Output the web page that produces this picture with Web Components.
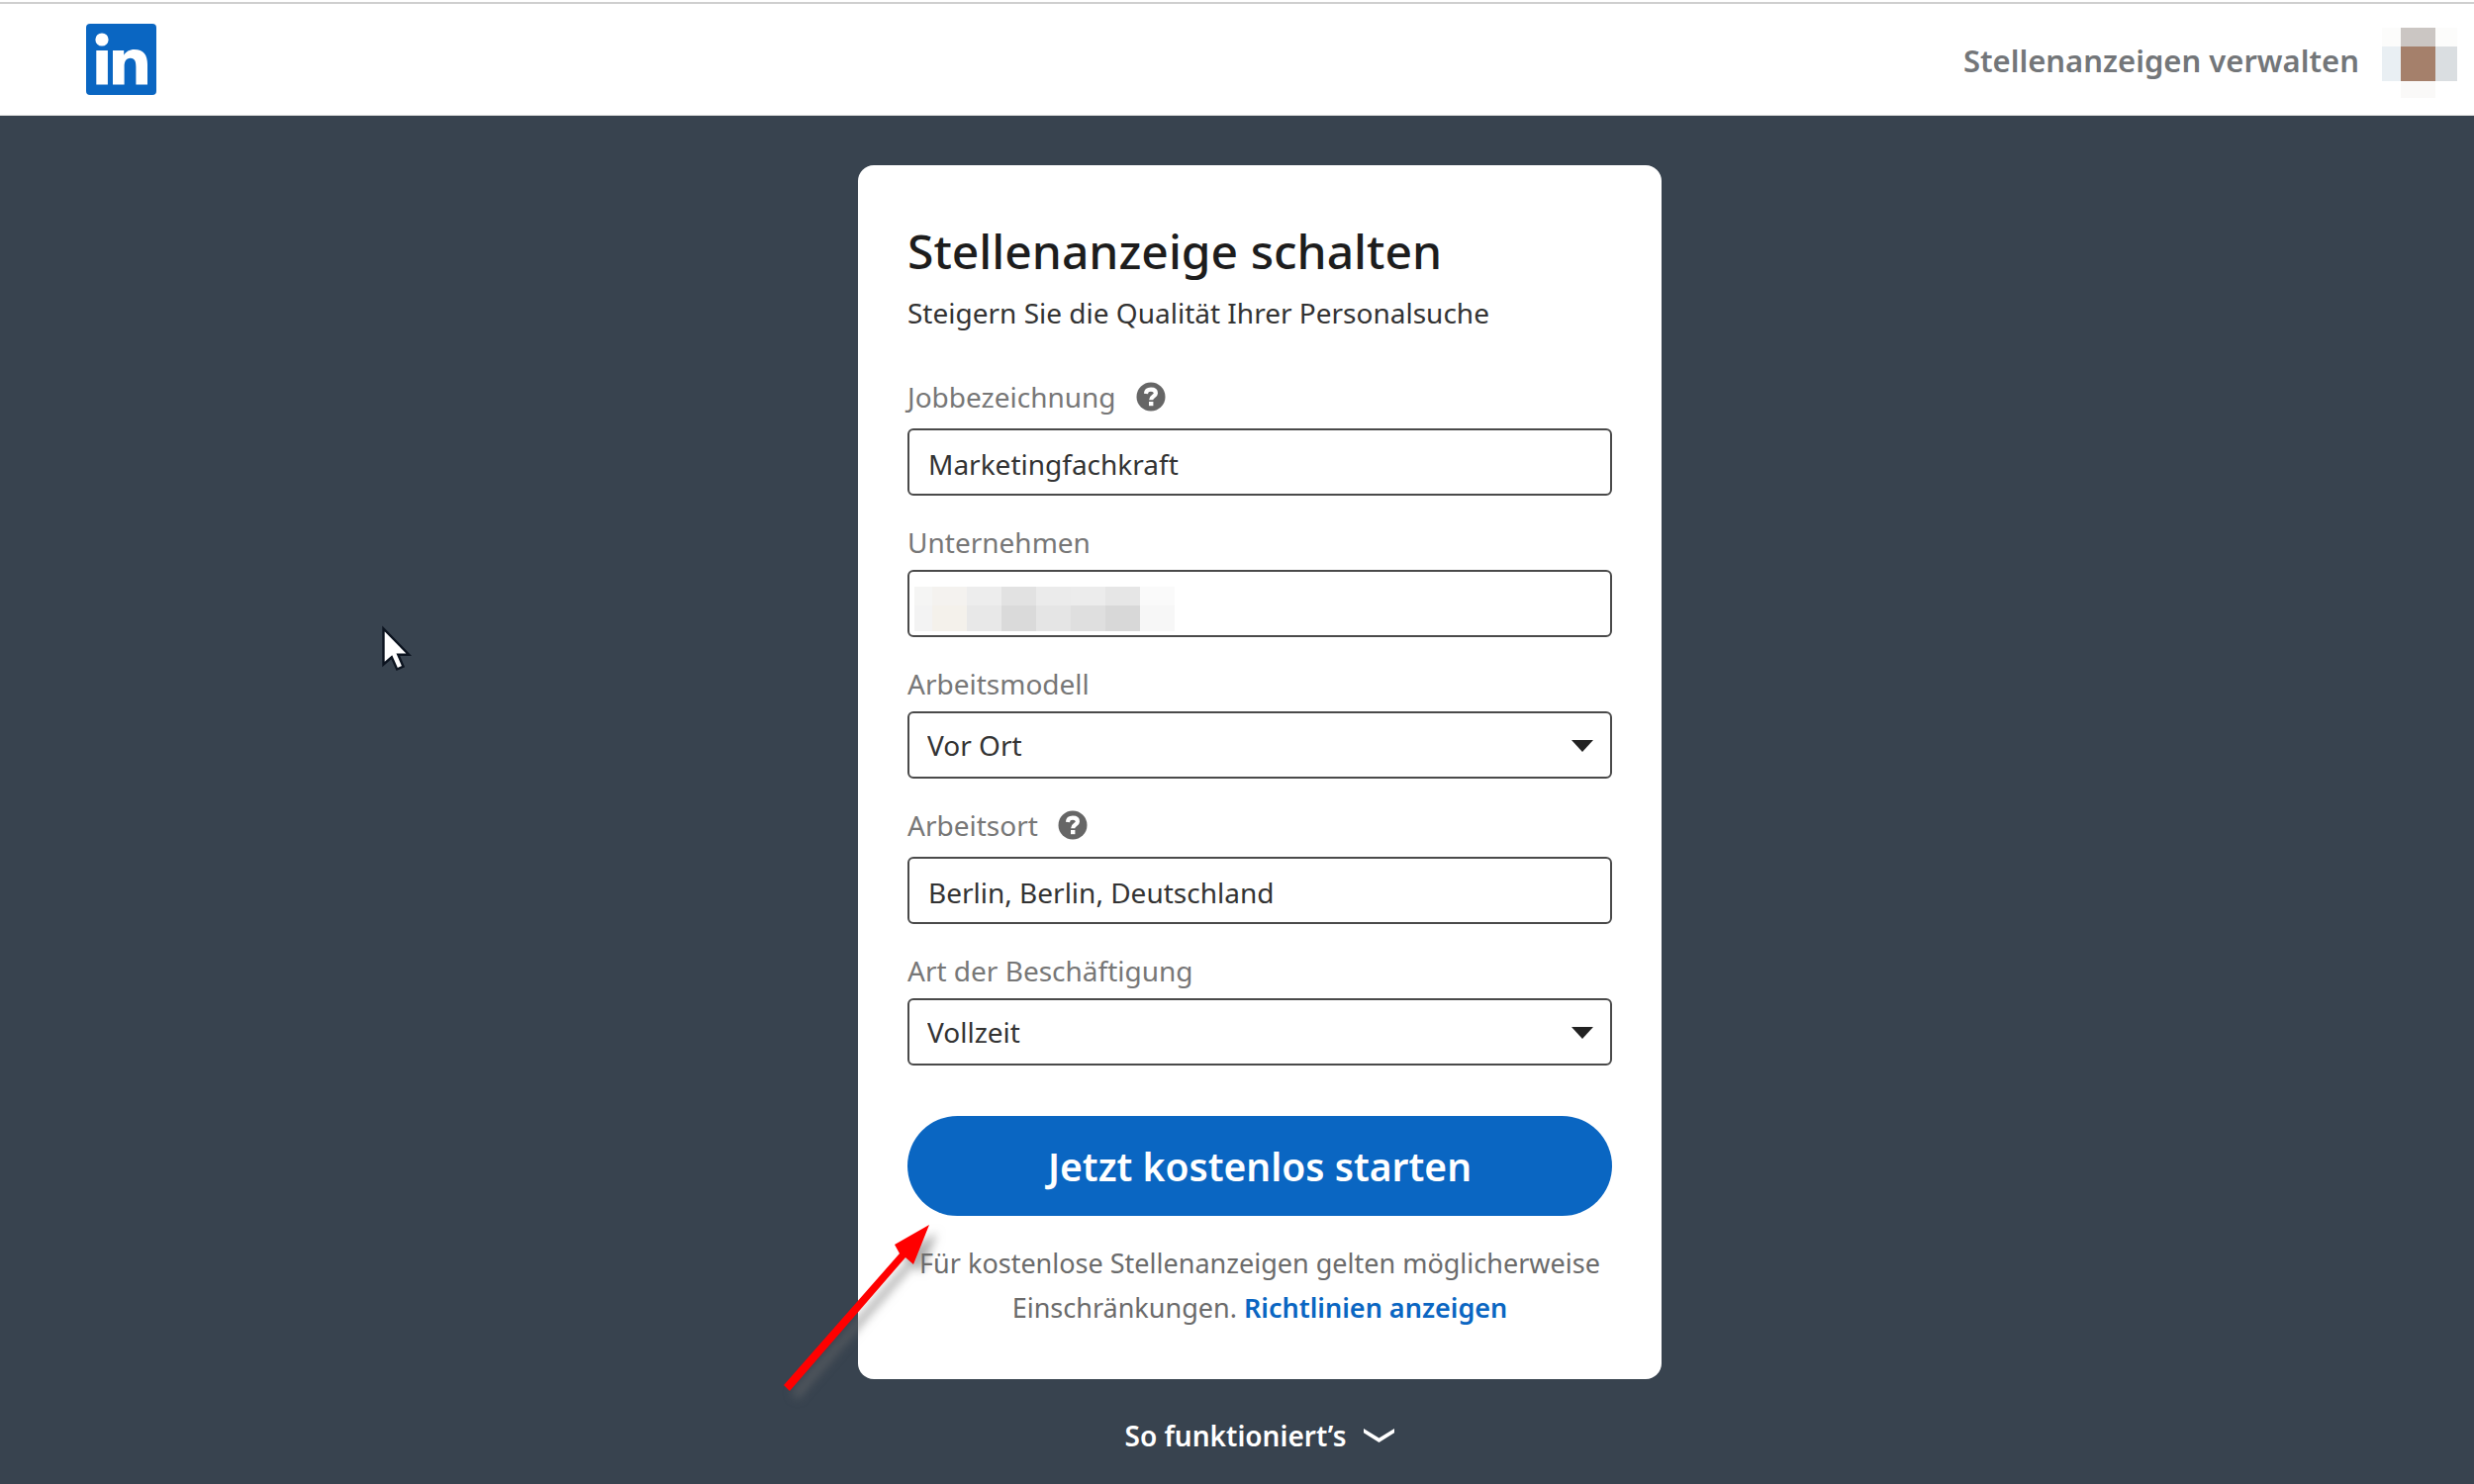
<!DOCTYPE html>
<html lang="de">
<head>
<meta charset="utf-8">
<meta name="viewport" content="width=device-width, initial-scale=1">
<title>Stellenanzeige schalten</title>
<style>
  body {
    margin: 0;
    font-family: "Noto Sans", "Open Sans", sans-serif;
    font-size: 28px;
    line-height: 40px;
    color: #1d1d1d;
    background: #38434f;
  }
</style>
</head>
<body>
<job-page>
  <page-header slot="header">Stellenanzeigen verwalten</page-header>

  <job-card>
    <span slot="title">Stellenanzeige schalten</span>
    <span slot="subtitle">Steigern Sie die Qualität Ihrer Personalsuche</span>

    <text-field value="Marketingfachkraft" help>Jobbezeichnung</text-field>
    <text-field>Unternehmen<masked-value slot="mask"></masked-value></text-field>
    <select-field options="Vor Ort,Hybrid,Remote">Arbeitsmodell</select-field>
    <text-field value="Berlin, Berlin, Deutschland" help>Arbeitsort</text-field>
    <select-field options="Vollzeit,Teilzeit,Befristet">Art der Beschäftigung</select-field>

    <start-button slot="action">Jetzt kostenlos starten</start-button>
    <legal-note slot="note" link="Richtlinien anzeigen">Für kostenlose Stellenanzeigen gelten möglicherweise Einschränkungen.</legal-note>
    <red-arrow slot="pointer"></red-arrow>
  </job-card>

  <more-toggle slot="more">So funktioniert’s</more-toggle>
  <mouse-cursor slot="cursor"></mouse-cursor>
</job-page>

<script>
class JobPage extends HTMLElement {
  constructor() {
    super();
    this.attachShadow({ mode: "open" });
  }

  static get styles() {
    return /* css */ `
      :host {
        display: flex;
        flex-direction: column;
        min-height: 100vh;
        position: relative;
      }
      main {
        flex: 1;
        display: flex;
        flex-direction: column;
        align-items: center;
        gap: 37px;
        padding: 50px 0 24px 46px;
      }
    `;
  }

  connectedCallback() {
    this.shadowRoot.innerHTML = /* html */ `
      <style>${JobPage.styles}</style>
      <slot name="header"></slot>
      <main>
        <slot></slot>
        <slot name="more"></slot>
      </main>
      <slot name="cursor"></slot>`;
  }
}

class PageHeader extends HTMLElement {
  constructor() {
    super();
    this.attachShadow({ mode: "open" });
  }

  static get styles() {
    return /* css */ `
      :host {
        display: block;
        background: #fff;
        border-top: 2px solid #fff;
        border-bottom: 1px solid #e4e4e4;
      }
      header {
        display: flex;
        align-items: center;
        justify-content: space-between;
        height: 112px;
        padding: 0 17px 0 87px;
        border-top: 2px solid #cfcfcf;
      }
      a {
        color: inherit;
        text-decoration: none;
      }
      .logo svg,
      .avatar {
        display: block;
      }
      nav {
        display: flex;
        align-items: flex-end;
        gap: 23px;
        padding-top: 6px;
        color: #737679;
        font-size: 31px;
        font-weight: 600;
      }
      nav a {
        padding-bottom: 18px;
      }
    `;
  }

  connectedCallback() {
    this.shadowRoot.innerHTML = /* html */ `
      <style>${PageHeader.styles}</style>
      <header>
        <a class="logo" href="#" aria-label="LinkedIn">
          <svg width="72" height="72" viewBox="0 0 72 72">
            <rect width="71" height="72" rx="4" fill="#0a66c2"/>
            <circle cx="16" cy="16" r="6.600" fill="#fff"/>
            <rect x="10.300" y="27" width="11.600" height="34.500" fill="#fff"/>
            <path d="M27 27h11.200v4.800c1.900-3.500 5.600-5.800 10.600-5.800C58 26 62 31.500 62 41v20.500H50.400V43.500c0-5-1.100-8.700-5.600-8.700-4.700 0-6.200 3.700-6.200 8.500v18.200H27z" fill="#fff"/>
          </svg>
        </a>
        <nav>
          <a href="#"><slot></slot></a>
          <svg class="avatar" width="76" height="71" viewBox="0 0 76 71" shape-rendering="crispEdges" aria-hidden="true">
            <rect width="76" height="19" fill="#fcfcfb"/>
            <rect x="19" width="35" height="19" fill="#cbc6c3"/>
            <rect y="19" width="19" height="35" fill="#e9eff3"/>
            <rect x="19" y="19" width="35" height="35" fill="#a5806b"/>
            <rect x="54" y="19" width="22" height="35" fill="#dadee1"/>
            <rect x="19" y="54" width="35" height="17" fill="#faf9f8"/>
          </svg>
        </nav>
      </header>`;
  }
}

class JobCard extends HTMLElement {
  constructor() {
    super();
    this.attachShadow({ mode: "open" });
  }

  static get styles() {
    return /* css */ `
      :host {
        display: block;
        box-sizing: border-box;
        position: relative;
        width: 100%;
        max-width: 812px;
        padding: 55px 50px 50px;
        background: #fff;
        border-radius: 16px;
      }
      h1 {
        margin: 0 0 10px;
        font-size: 48px;
        line-height: 64px;
        font-weight: 500;
      }
      p {
        margin: 0 0 45px;
        color: #333;
      }
      .fields {
        display: flex;
        flex-direction: column;
        gap: 28px;
        margin-bottom: 52px;
      }
    `;
  }

  connectedCallback() {
    this.shadowRoot.innerHTML = /* html */ `
      <style>${JobCard.styles}</style>
      <h1><slot name="title"></slot></h1>
      <p><slot name="subtitle"></slot></p>
      <div class="fields"><slot></slot></div>
      <slot name="action"></slot>
      <slot name="note"></slot>
      <slot name="pointer"></slot>`;
  }
}

// shared by text-field and select-field
const fieldStyles = /* css */ `
  :host {
    display: block;
  }
  .top {
    display: flex;
    align-items: center;
    gap: 20px;
    margin-bottom: 8px;
    color: #777;
  }
  :host([help]) .top {
    margin-bottom: 12px;
  }
  .box {
    position: relative;
  }
  input,
  select {
    display: block;
    box-sizing: border-box;
    width: 100%;
    height: 68px;
    margin: 0 0 -1px;
    padding: 4px 20px 0 19px;
    border: 2px solid #4a4a4a;
    border-radius: 6px;
    background: #fff;
    color: #333;
    font: inherit;
    appearance: none;
  }
  select {
    padding: 0 60px 0 18px;
  }
`;

class TextField extends HTMLElement {
  constructor() {
    super();
    this.attachShadow({ mode: "open" });
  }

  connectedCallback() {
    const help = this.hasAttribute("help") ? "<help-icon></help-icon>" : "";
    this.shadowRoot.innerHTML = /* html */ `
      <style>${fieldStyles}</style>
      <div class="top">
        <label for="field"><slot></slot></label>
        ${help}
      </div>
      <div class="box">
        <input id="field" type="text" spellcheck="false">
        <slot name="mask"></slot>
      </div>`;
    this.shadowRoot.querySelector("input").value = this.getAttribute("value") || "";
  }
}

class SelectField extends HTMLElement {
  constructor() {
    super();
    this.attachShadow({ mode: "open" });
  }

  static get styles() {
    return /* css */ `
      svg {
        position: absolute;
        right: 19px;
        top: 29px;
        pointer-events: none;
      }
    `;
  }

  connectedCallback() {
    const options = this.getAttribute("options")
      .split(",")
      .map((name) => `<option>${name}</option>`)
      .join("");
    this.shadowRoot.innerHTML = /* html */ `
      <style>${fieldStyles}${SelectField.styles}</style>
      <div class="top">
        <label for="field"><slot></slot></label>
      </div>
      <div class="box">
        <select id="field">${options}</select>
        <svg width="22" height="12" viewBox="0 0 22 12" aria-hidden="true">
          <path d="M0 0h22L11 12z" fill="#222"/>
        </svg>
      </div>`;
  }
}

class HelpIcon extends HTMLElement {
  constructor() {
    super();
    this.attachShadow({ mode: "open" });
  }

  static get styles() {
    return /* css */ `
      :host {
        display: block;
      }
      button {
        display: block;
        padding: 0;
        border: 0;
        background: none;
        cursor: pointer;
      }
      svg {
        display: block;
      }
    `;
  }

  connectedCallback() {
    this.shadowRoot.innerHTML = /* html */ `
      <style>${HelpIcon.styles}</style>
      <button type="button" aria-label="Hilfe">
        <svg width="30" height="30" viewBox="0 0 30 30">
          <circle cx="15" cy="15" r="14.500" fill="#666"/>
          <path d="M10 12c.2-3.100 2-4.400 5-4.400 3.100 0 4.900 1.400 4.900 3.800 0 3.300-4.700 3.100-4.700 6.800" fill="none" stroke="#fff" stroke-width="4.200"/>
          <rect x="13" y="20" width="4.400" height="4.200" fill="#fff"/>
        </svg>
      </button>`;
  }
}

class MaskedValue extends HTMLElement {
  constructor() {
    super();
    this.attachShadow({ mode: "open" });
  }

  static get styles() {
    return /* css */ `
      :host {
        position: absolute;
        left: 7px;
        top: 17px;
        display: grid;
        grid-template-columns: 18px repeat(7, 35px);
        grid-template-rows: 19px 26px;
        pointer-events: none;
      }
    `;
  }

  connectedCallback() {
    const tones = [
      "#f5f5f4", "#f4f2ef", "#ededed", "#e2e2e2", "#ebebeb", "#ececec", "#e6e6e6", "#fafafa",
      "#f3f3f3", "#f4f1eb", "#e8e8e8", "#dadada", "#e5e5e5", "#dfdfdf", "#d8d8d8", "#f7f7f7",
    ];
    this.shadowRoot.innerHTML = /* html */ `
      <style>${MaskedValue.styles}</style>
      ${tones.map((tone) => `<i style="background:${tone}"></i>`).join("")}`;
  }
}

class StartButton extends HTMLElement {
  constructor() {
    super();
    this.attachShadow({ mode: "open" });
  }

  static get styles() {
    return /* css */ `
      :host {
        display: block;
        margin-bottom: 25px;
      }
      button {
        display: block;
        width: 100%;
        height: 101px;
        padding: 0;
        border: 0;
        border-radius: 51px;
        background: #0a66c2;
        color: #fff;
        font: inherit;
        font-size: 39px;
        font-weight: 600;
        cursor: pointer;
      }
    `;
  }

  connectedCallback() {
    this.shadowRoot.innerHTML = /* html */ `
      <style>${StartButton.styles}</style>
      <button type="button"><slot></slot></button>`;
  }
}

class LegalNote extends HTMLElement {
  constructor() {
    super();
    this.attachShadow({ mode: "open" });
  }

  static get styles() {
    return /* css */ `
      :host {
        display: block;
        font-size: 27px;
        line-height: 45px;
        text-align: center;
        color: #6b6b6b;
      }
      a {
        color: #0a66c2;
        font-weight: 600;
        text-decoration: none;
      }
    `;
  }

  connectedCallback() {
    this.shadowRoot.innerHTML = /* html */ `
      <style>${LegalNote.styles}</style>
      <slot></slot> <a href="#">${this.getAttribute("link")}</a>`;
  }
}

class MoreToggle extends HTMLElement {
  constructor() {
    super();
    this.attachShadow({ mode: "open" });
  }

  static get styles() {
    return /* css */ `
      :host {
        display: block;
      }
      button {
        display: flex;
        align-items: center;
        gap: 18px;
        padding: 0;
        border: 0;
        background: none;
        color: #fff;
        font: inherit;
        line-height: 40px;
        font-weight: 600;
        cursor: pointer;
      }
    `;
  }

  connectedCallback() {
    this.shadowRoot.innerHTML = /* html */ `
      <style>${MoreToggle.styles}</style>
      <button type="button">
        <slot></slot>
        <svg width="31" height="14" viewBox="0 0 31 14" aria-hidden="true">
          <path d="M0 0v4.200L15.500 14 31 4.200V0L15.500 9.500z" fill="#fff"/>
        </svg>
      </button>`;
  }
}

class RedArrow extends HTMLElement {
  constructor() {
    super();
    this.attachShadow({ mode: "open" });
  }

  static get styles() {
    return /* css */ `
      :host {
        position: absolute;
        left: -76px;
        bottom: -36px;
        pointer-events: none;
      }
      svg {
        display: block;
        overflow: visible;
        filter: drop-shadow(8px 8px 5px rgba(110, 110, 110, 0.55));
      }
    `;
  }

  connectedCallback() {
    this.shadowRoot.innerHTML = /* html */ `
      <style>${RedArrow.styles}</style>
      <svg width="160" height="193" viewBox="0 0 160 193" aria-hidden="true">
        <path d="M1 163 118 30l-5-9 35-20-16 40-8-7L7 169z" fill="#f00"/>
      </svg>`;
  }
}

class MouseCursor extends HTMLElement {
  constructor() {
    super();
    this.attachShadow({ mode: "open" });
  }

  static get styles() {
    return /* css */ `
      :host {
        position: absolute;
        left: 385px;
        top: 632px;
        pointer-events: none;
      }
      svg {
        display: block;
      }
    `;
  }

  connectedCallback() {
    this.shadowRoot.innerHTML = /* html */ `
      <style>${MouseCursor.styles}</style>
      <svg width="32" height="48" viewBox="0 0 32 48" aria-hidden="true">
        <path d="M2.500 3.500v36l8.300-7.200 5.400 12.200 6.300-2.800-5.200-12h10.900z" fill="#fff" stroke="#0c1420" stroke-width="2.400"/>
      </svg>`;
  }
}

customElements.define("job-page", JobPage);
customElements.define("page-header", PageHeader);
customElements.define("job-card", JobCard);
customElements.define("text-field", TextField);
customElements.define("select-field", SelectField);
customElements.define("help-icon", HelpIcon);
customElements.define("masked-value", MaskedValue);
customElements.define("start-button", StartButton);
customElements.define("legal-note", LegalNote);
customElements.define("more-toggle", MoreToggle);
customElements.define("red-arrow", RedArrow);
customElements.define("mouse-cursor", MouseCursor);
</script>
</body>
</html>
